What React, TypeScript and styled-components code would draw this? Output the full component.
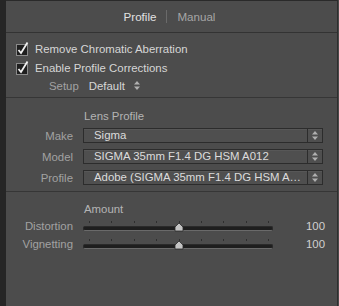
import * as React from 'react';
import styled, { createGlobalStyle } from 'styled-components';

const GlobalStyle = createGlobalStyle`
  html, body {
    margin: 0;
    padding: 0;
    background: #4a4a4a;
  }
  body {
    font-family: 'Liberation Sans', Arial, sans-serif;
    font-size: 11.4px;
  }
`;

const Frame = styled.div`
  display: flex;
  width: 339px;
  height: 306px;
  background: #4a4a4a;
  overflow: hidden;
`;

const Gutter = styled.div`
  width: 6px;
  flex-shrink: 0;
  background: #262626;
`;

const Panel = styled.div`
  display: flex;
  flex-direction: column;
  width: 331px;
  background: #4c4c4c;
  border-top: 1px solid #2a2a2a;
  border-right: 1px solid #2e2e2e;
`;

const Tabs = styled.div`
  display: flex;
  align-items: center;
  justify-content: center;
  gap: 10px;
  height: 31px;
  padding-right: 4px;
  border-bottom: 1px solid #333;
`;

const Tab = styled.span<{ $active?: boolean }>`
  color: ${({ $active }) => ($active ? '#e2e2e2' : '#a6a6a6')};
  font-size: 11.6px;
`;

const TabDivider = styled.span`
  width: 1px;
  height: 13px;
  background: #6a6a6a;
`;

const Section = styled.div<{ $pad: string; $last?: boolean }>`
  display: flex;
  flex-direction: column;
  padding: ${({ $pad }) => $pad};
  border-bottom: ${({ $last }) => ($last ? 'none' : '1px solid #363636')};
`;

const CheckRow = styled.label`
  display: flex;
  align-items: center;
  gap: 5px;
  height: 19px;
  padding-left: 10px;
  color: #d6d6d6;
`;

const SetupRow = styled.div`
  display: flex;
  align-items: center;
  height: 17px;
  padding-left: 43px;
  gap: 10px;
`;

const Muted = styled.span`
  color: #a2a2a2;
`;

const Plain = styled.span`
  color: #d6d6d6;
  display: flex;
  align-items: center;
  gap: 9px;
`;

const Title = styled.div<{ $h: number }>`
  height: ${({ $h }) => $h}px;
  display: flex;
  align-items: center;
  padding-left: 78px;
  color: #b4b4b4;
`;

const FieldRow = styled.div`
  display: grid;
  grid-template-columns: 67px 240px;
  column-gap: 10px;
  align-items: center;
  height: 21px;
`;

const FieldLabel = styled.span`
  color: #a2a2a2;
  text-align: right;
`;

const Select = styled.div`
  display: flex;
  height: 13px;
  background: #4f4f4f;
  border: 1px solid #2c2c2c;
  box-shadow: inset 0 1px 0 #575757;
`;

const SelectText = styled.span`
  flex: 1;
  padding-left: 10px;
  color: #dcdcdc;
  line-height: 13px;
  white-space: nowrap;
  overflow: hidden;
`;

const Stepper = styled.span`
  width: 14px;
  display: flex;
  align-items: center;
  justify-content: center;
  border-left: 1px solid #2c2c2c;
`;

const SliderRow = styled.div`
  display: grid;
  grid-template-columns: 67px 190px 1fr;
  column-gap: 10px;
  align-items: center;
  height: 18px;
`;

const Track = styled.div`
  position: relative;
  height: 18px;
`;

const Groove = styled.div`
  position: absolute;
  left: 0;
  right: 0;
  top: 9px;
  height: 3px;
  border-radius: 2px;
  background: #1e1e1e;
  border: 1px solid #2a2a2a;
  border-bottom-color: #6a6a6a;
`;

const Tick = styled.span`
  position: absolute;
  top: 4px;
  width: 1px;
  height: 2px;
  background: #2e2e2e;
`;

const Thumb = styled.svg`
  position: absolute;
  top: 6px;
  width: 10px;
  height: 9px;
`;

const Value = styled.span`
  color: #d0d0d0;
  text-align: right;
  padding-right: 12px;
`;

const Checkbox = () => (
  <svg width="14" height="15" viewBox="0 0 14 15">
    <rect x="0.5" y="3.5" width="11" height="11" fill="#1f1f1f" stroke="#8a8a8a" />
    <path d="M2.5 9 L5 12 L11.5 1.5" fill="none" stroke="#f0f0f0" strokeWidth="1.8" />
  </svg>
);

const Arrows = () => (
  <svg width="6" height="9" viewBox="0 0 6 9">
    <path d="M0 3.5 L3 0 L6 3.5 Z M0 5.5 L3 9 L6 5.5 Z" fill="#b0b0b0" />
  </svg>
);

const ticks = [6, 28, 51, 73, 96, 118, 140, 163, 185];

const Slider: React.FC<{ label: string; value: number; pos: number }> = ({ label, value, pos }) => (
  <SliderRow>
    <FieldLabel>{label}</FieldLabel>
    <Track>
      {ticks.map((t) => (
        <Tick key={t} style={{ left: t }} />
      ))}
      <Groove />
      <Thumb viewBox="0 0 10 9" style={{ left: pos - 5 }}>
        <path d="M5 0 L9 4 L9 8 L1 8 L1 4 Z" fill="#c4c4c4" stroke="#2a2a2a" strokeWidth="0.8" />
      </Thumb>
    </Track>
    <Value>{value}</Value>
  </SliderRow>
);

const fields = [
  { label: 'Make', value: 'Sigma' },
  { label: 'Model', value: 'SIGMA 35mm F1.4 DG HSM A012' },
  { label: 'Profile', value: 'Adobe (SIGMA 35mm F1.4 DG HSM A…' },
];

const App: React.FC = () => (
  <>
    <GlobalStyle />
    <Frame>
      <Gutter />
      <Panel>
        <Tabs>
          <Tab $active>Profile</Tab>
          <TabDivider />
          <Tab>Manual</Tab>
        </Tabs>
        <Section $pad="6px 0 3px">
          <CheckRow>
            <Checkbox />
            Remove Chromatic Aberration
          </CheckRow>
          <CheckRow>
            <Checkbox />
            Enable Profile Corrections
          </CheckRow>
          <SetupRow>
            <Muted>Setup</Muted>
            <Plain>
              Default <Arrows />
            </Plain>
          </SetupRow>
        </Section>
        <Section $pad="9px 0 3px">
          <Title $h={18}>Lens Profile</Title>
          {fields.map((f) => (
            <FieldRow key={f.label}>
              <FieldLabel>{f.label}</FieldLabel>
              <Select>
                <SelectText>{f.value}</SelectText>
                <Stepper>
                  <Arrows />
                </Stepper>
              </Select>
            </FieldRow>
          ))}
        </Section>
        <Section $pad="9px 0 0" $last>
          <Title $h={16}>Amount</Title>
          <Slider label="Distortion" value={100} pos={96} />
          <Slider label="Vignetting" value={100} pos={96} />
        </Section>
      </Panel>
    </Frame>
  </>
);

export default App;
